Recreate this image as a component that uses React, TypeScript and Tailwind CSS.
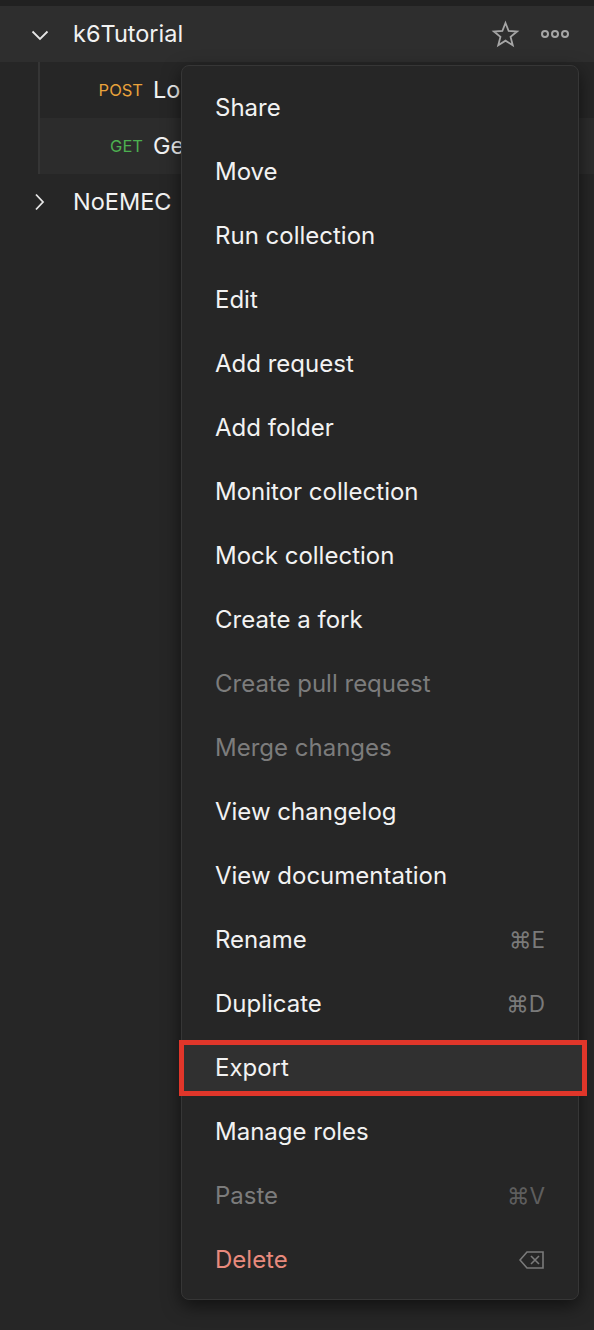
import React from "react";

type Item = {
  label: string;
  muted?: boolean;
  danger?: boolean;
  shortcut?: string;
  icon?: boolean;
  active?: boolean;
};

const items: Item[] = [
  { label: "Share" },
  { label: "Move" },
  { label: "Run collection" },
  { label: "Edit" },
  { label: "Add request" },
  { label: "Add folder" },
  { label: "Monitor collection" },
  { label: "Mock collection" },
  { label: "Create a fork" },
  { label: "Create pull request", muted: true },
  { label: "Merge changes", muted: true },
  { label: "View changelog" },
  { label: "View documentation" },
  { label: "Rename", shortcut: "⌘E" },
  { label: "Duplicate", shortcut: "⌘D" },
  { label: "Export", active: true },
  { label: "Manage roles" },
  { label: "Paste", muted: true, shortcut: "⌘V" },
  { label: "Delete", danger: true, icon: true },
];

function Chevron({ open }: { open: boolean }) {
  return (
    <svg width="18" height="18" viewBox="0 0 18 18" fill="none" stroke="#e6e6e6" strokeWidth="1.8">
      {open ? <path d="M1.5 5.5l7.5 7.5 7.5-7.5" /> : <path d="M6 1.5l7 7.5-7 7.5" />}
    </svg>
  );
}

function BackspaceIcon() {
  return (
    <svg width="26" height="20" viewBox="0 0 26 20" fill="none" stroke="#7a7a7a" strokeWidth="1.6">
      <path d="M8 2h16v16H8L1 10z" />
      <path d="M12 6l8 8M20 6l-8 8" />
    </svg>
  );
}

export default function App() {
  return (
    <div className="relative w-[594px] h-[1330px] overflow-hidden bg-[#262626] font-['Inter','Noto_Sans',sans-serif]">
      <div className="h-[6px] bg-[#212121]" />

      <div className="flex items-center h-[56px] bg-[#2e2e2e]">
        <div className="w-[73px] flex justify-center pl-[6px] pt-[2px]">
          <Chevron open />
        </div>
        <span className="text-[23.5px] text-[#f2f2f2]">k6Tutorial</span>
        <div className="ml-auto flex items-center gap-[20px] pr-[24px]">
          <svg width="29" height="29" viewBox="0 0 24 24" fill="none" stroke="#a6a6a6" strokeWidth="1.5" strokeLinejoin="miter">
            <path d="M12 2.5l2.6 6.6 7 .4-5.4 4.5 1.8 6.9L12 17.1l-6 3.8 1.8-6.9-5.4-4.5 7-.4z" />
          </svg>
          <svg width="30" height="10" viewBox="0 0 30 10" fill="none" stroke="#a6a6a6" strokeWidth="2">
            <circle cx="5" cy="5" r="3" />
            <circle cx="15" cy="5" r="3" />
            <circle cx="25" cy="5" r="3" />
          </svg>
        </div>
      </div>

      <div className="flex">
        <div className="w-[38px]" />
        <div className="w-[2px] bg-[#353535]" />
        <div className="flex-1">
          <div className="flex items-center h-[56px] bg-[#262626]">
            <span className="w-[103px] text-right text-[16.5px] text-[#e9a23b]">POST</span>
            <span className="ml-[10px] text-[23.5px] text-[#f2f2f2]">Login</span>
          </div>
          <div className="flex items-center h-[56px] bg-[#2c2c2c]">
            <span className="w-[103px] text-right text-[16.5px] text-[#4caf50]">GET</span>
            <span className="ml-[10px] text-[23.5px] text-[#f2f2f2]">Get crocodiles</span>
          </div>
        </div>
      </div>

      <div className="flex items-center h-[56px]">
        <div className="w-[73px] flex justify-center pl-[4px]">
          <Chevron open={false} />
        </div>
        <span className="text-[23.5px] text-[#f2f2f2]">NoEMEC</span>
      </div>

      <div className="absolute left-[181px] top-[65px] w-[398px] rounded-[8px] border border-[#363636] bg-[#262626] pt-[10px] pb-[7px] shadow-[0_6px_18px_rgba(0,0,0,0.55)]">
        {items.map((it) => (
          <div key={it.label} className="relative flex items-center h-[64px] px-[33px]">
            {it.active && (
              <div className="absolute left-[-3px] right-[-9px] top-[4px] bottom-[4px] border-[5px] border-[#e0362a] bg-[#303030]" />
            )}
            <span
              className={
                "relative text-[24px] " +
                (it.danger ? "text-[#e88a7d]" : it.muted ? "text-[#7c7c7c]" : "text-[#f2f2f2]")
              }
            >
              {it.label}
            </span>
            {it.shortcut && (
              <span
                className={
                  "relative ml-auto text-[22.5px] " + (it.muted ? "text-[#5e5e5e]" : "text-[#7a7a7a]")
                }
              >
                {it.shortcut}
              </span>
            )}
            {it.icon && (
              <span className="relative ml-auto flex">
                <BackspaceIcon />
              </span>
            )}
          </div>
        ))}
      </div>
    </div>
  );
}
